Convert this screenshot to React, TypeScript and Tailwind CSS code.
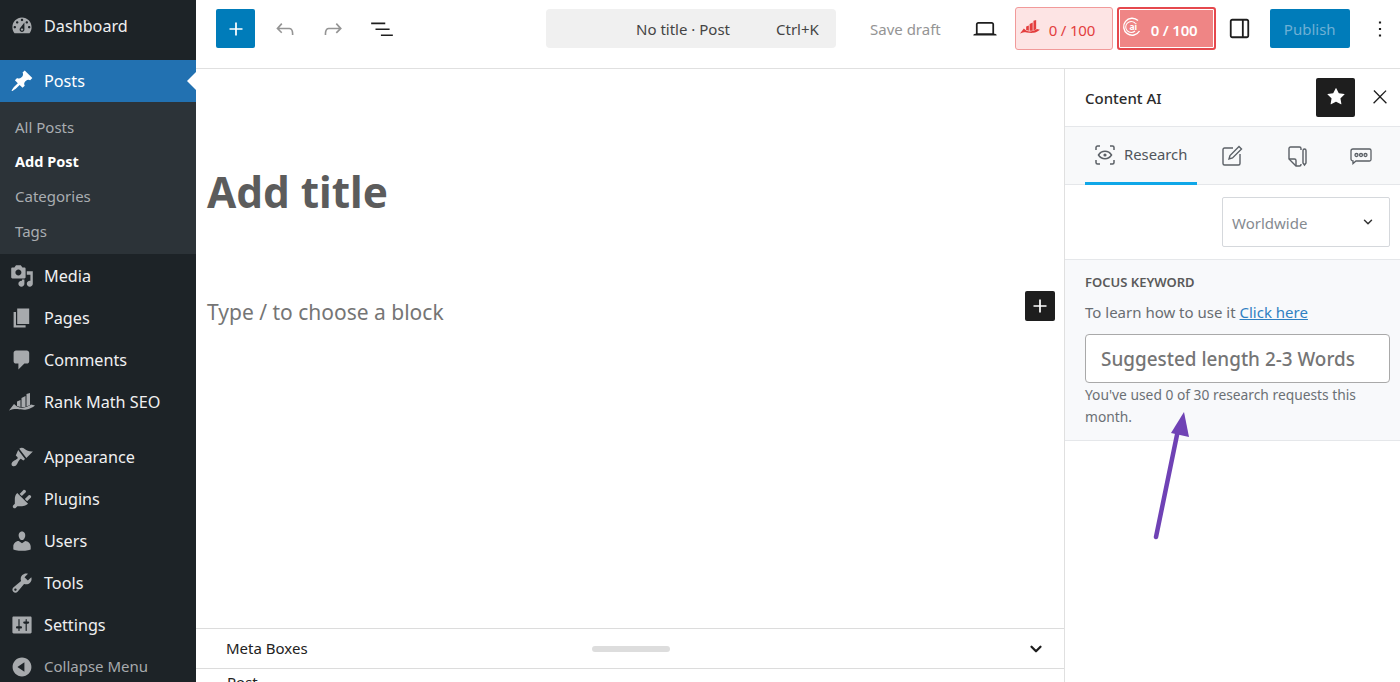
import React from "react";
import { ChevronDown } from "lucide-react";

const font = "font-['Noto_Sans',sans-serif]";

interface MenuItem {
  label: string;
  path?: string;
  custom?: React.ReactNode;
  gapBefore?: boolean;
}

// dashicons, 20x20 grid
const paths = {
  dashboard:
    "M3.76 16h12.48c1.1-1.37 1.76-3.11 1.76-5 0-4.42-3.58-8-8-8s-8 3.58-8 8c0 1.89.66 3.63 1.76 5zM10 4c.55 0 1 .45 1 1s-.45 1-1 1-1-.45-1-1 .45-1 1-1zM6 6c.55 0 1 .45 1 1s-.45 1-1 1-1-.45-1-1 .45-1 1-1zm8 0c.55 0 1 .45 1 1s-.45 1-1 1-1-.45-1-1 .45-1 1-1zm-5.37 5.55L12 7v6c0 1.1-.9 2-2 2s-2-.9-2-2c0-.57.24-1.08.63-1.45zM4 10c.55 0 1 .45 1 1s-.45 1-1 1-1-.45-1-1 .45-1 1-1zm12 0c.55 0 1 .45 1 1s-.45 1-1 1-1-.45-1-1 .45-1 1-1zm-5 3c0-.55-.45-1-1-1s-1 .45-1 1 .45 1 1 1 1-.45 1-1z",
  post: "M10.44 3.02l1.82-1.82 6.36 6.35-1.83 1.82c-1.05-.68-2.48-.57-3.41.36l-.75.75c-.92.93-1.04 2.35-.35 3.41l-1.83 1.82-2.41-2.41-2.8 2.79c-.42.42-3.38 2.71-3.8 2.29s1.86-3.39 2.28-3.81l2.79-2.79L4.1 9.36l1.83-1.82c1.05.69 2.48.57 3.4-.36l.75-.75c.93-.92 1.05-2.35.36-3.41z",
  media:
    "M13 11V4c0-.55-.45-1-1-1h-1.67L9 1H5L3.67 3H2c-.55 0-1 .45-1 1v7c0 .55.45 1 1 1h10c.55 0 1-.45 1-1zM7 4.5c1.38 0 2.5 1.12 2.5 2.5S8.38 9.5 7 9.5 4.5 8.38 4.5 7 5.62 4.5 7 4.5zM14 6h5v10.5c0 1.38-1.12 2.5-2.5 2.5S14 17.88 14 16.5s1.12-2.5 2.5-2.5c.17 0 .34.02.5.05V9h-3V6zm-4 8.05V13h2v3.5c0 1.38-1.12 2.5-2.5 2.5S7 17.88 7 16.5 8.12 14 9.5 14c.17 0 .34.02.5.05z",
  page: "M6 15V2h10v13H6zm-1 1h8v2H3V5h2v11z",
  comments:
    "M5 2h9c1.1 0 2 .9 2 2v7c0 1.1-.9 2-2 2h-2l-5 5v-5H5c-1.1 0-2-.9-2-2V4c0-1.1.9-2 2-2z",
  plugins:
    "M13.11 4.36L9.87 7.6 8 5.73l3.24-3.24c.35-.34 1.05-.2 1.56.32.52.51.66 1.21.31 1.55zm-8 1.77l.91-1.12 9.01 9.01-1.19.84c-.71.71-2.63 1.16-3.82 1.16H6.14L4.9 17.26c-.59.59-1.54.59-2.12 0-.59-.58-.59-1.53 0-2.12l1.24-1.24v-3.88c0-1.13.4-3.19 1.09-3.89zm7.26 3.97l3.24-3.24c.34-.35 1.04-.21 1.55.31.52.51.66 1.21.31 1.55l-3.24 3.25z",
  users:
    "M10 9.25c-2.27 0-2.73-3.44-2.73-3.44C7 4.02 7.82 2 9.97 2c2.16 0 2.98 2.02 2.71 3.81 0 0-.41 3.44-2.68 3.44zm0 2.57L12.72 10c2.39 0 4.52 2.33 4.52 4.53v2.49s-3.65 1.13-7.24 1.13c-3.65 0-7.24-1.13-7.24-1.13v-2.49c0-2.25 1.94-4.48 4.47-4.48z",
  tools:
    "M16.68 9.77c-1.34 1.34-3.3 1.67-4.95.99l-5.41 6.52c-.99.99-2.59.99-3.58 0s-.99-2.59 0-3.57l6.52-5.42c-.68-1.65-.35-3.61.99-4.95 1.28-1.28 3.12-1.62 4.72-1.06l-2.89 2.89 2.82 2.82 2.86-2.87c.53 1.58.18 3.39-1.08 4.65zM3.81 16.21c.4.39 1.04.39 1.43 0 .4-.4.4-1.04 0-1.43-.39-.4-1.03-.4-1.43 0-.39.39-.39 1.03 0 1.43z",
  settings:
    "M18 16V4c0-.55-.45-1-1-1H3c-.55 0-1 .45-1 1v12c0 .55.45 1 1 1h14c.55 0 1-.45 1-1zM8 11h1c.55 0 1 .45 1 1s-.45 1-1 1H8v1.5c0 .28-.22.5-.5.5s-.5-.22-.5-.5V13H6c-.55 0-1-.45-1-1s.45-1 1-1h1V5.5c0-.28.22-.5.5-.5s.5.22.5.5V11zm5-2h-1c-.55 0-1-.45-1-1s.45-1 1-1h1V5.5c0-.28.22-.5.5-.5s.5.22.5.5V7h1c.55 0 1 .45 1 1s-.45 1-1 1h-1v5.5c0 .28-.22.5-.5.5s-.5-.22-.5-.5V9z",
  collapse:
    "M10 2.16c4.33 0 7.84 3.51 7.84 7.84s-3.51 7.84-7.84 7.84S2.16 14.33 2.16 10 5.71 2.16 10 2.16zm2 11.72V6.12L6.18 9.97z",
};

// gutenberg icons, 24x24 grid
const gb = {
  plus: "M18 11.2h-5.2V6h-1.6v5.2H6v1.6h5.2V18h1.6v-5.2H18z",
  undo: "M18.3 11.7c-.6-.6-1.4-.9-2.3-.9H6.7l2.9-3.3-1.1-1-4.5 5L8.5 16l1-1-2.7-2.7H16c.5 0 .9.2 1.3.5 1 1 1 3.4 1 4.5v.3h1.5v-.2c0-1.5 0-4.3-1.5-5.7z",
  redo: "M15.6 6.5l-1.1 1 2.9 3.3H8c-.9 0-1.7.3-2.3.9-1.4 1.5-1.4 4.2-1.4 5.6v.2h1.5v-.3c0-1.1 0-3.5 1-4.5.3-.3.7-.5 1.3-.5h9.2L14.5 15l1.1 1.1 4.6-4.6-4.6-5z",
  list: "M2 6h13v1.5H2V6zm4 5.5h13V13H6v-1.5zM11 17h11v1.5H11V17z",
  desktop:
    "M20.5 16h-.7V8c0-1.1-.9-2-2-2H6.2c-1.1 0-2 .9-2 2v8h-.7c-.8 0-1.5.7-1.5 1.5h20c0-.8-.7-1.5-1.5-1.5zM5.7 8c0-.3.2-.5.5-.5h11.6c.3 0 .5.2.5.5v7.6H5.7V8z",
  sidebar:
    "M18 4H6c-1.1 0-2 .9-2 2v12c0 1.1.9 2 2 2h12c1.1 0 2-.9 2-2V6c0-1.1-.9-2-2-2zm-4 14.5H6c-.3 0-.5-.2-.5-.5V6c0-.3.2-.5.5-.5h8v13zm4.5-.5c0 .3-.2.5-.5.5h-2.5v-13H18c.3 0 .5.2.5.5v12z",
  more: "M13 19h-2v-2h2v2zm0-6h-2v-2h2v2zm0-6h-2V5h2v2z",
  close:
    "M13 11.8l6.1-6.3-1-1-6.1 6.2-6.1-6.3-1 1 6.1 6.3-6.5 6.7 1 1 6.5-6.6 6.5 6.6 1-1z",
  star: "M11.776 4.454a.25.25 0 01.448 0l2.069 4.192a.25.25 0 00.188.137l4.626.672a.25.25 0 01.139.426l-3.348 3.263a.25.25 0 00-.072.222l.79 4.607a.25.25 0 01-.362.263l-4.138-2.175a.25.25 0 00-.232 0l-4.138 2.175a.25.25 0 01-.363-.263l.79-4.607a.25.25 0 00-.071-.222L4.754 9.881a.25.25 0 01.139-.426l4.626-.672a.25.25 0 00.188-.137l2.069-4.192z",
};

const Icon = ({ d, box = 20, className }: { d: string; box?: number; className?: string }) => (
  <svg viewBox={`0 0 ${box} ${box}`} className={className} fill="currentColor">
    <path d={d} />
  </svg>
);

const RankMathIcon = ({ className }: { className?: string }) => (
  <svg viewBox="0 0 26 20" className={className} fill="currentColor">
    <path d="M8 14V9.500L11.500 8V15zM12.500 15V6L16.500 4V15zM17.500 14.500V2L21 1V13z" />
    <path d="M0 18.500L5 12l3 2.500c3 1.500 6 1.500 9 .5 2-.6 4-1.600 5-2.500l4 1c-2.500 2-5.500 3.500-8.500 4-3.500.6-6-.3-9-.5-3-.2-5 .2-8.500 1.500z" />
  </svg>
);

const BrushIcon = ({ className }: { className?: string }) => (
  <svg viewBox="0 0 22 20" className={className} fill="currentColor">
    <path d="M8.5 2.5c1.5-1.4 3.5-1 5 .2 2 1.6 3.800 2.500 7.500 2.300l-6 6z" />
    <path d="M7.500 3.500l6.300 8.300-1.600 1.500-2.300-1.800c-.9.400-1.300 1.200-2.100 2.400-.7 1.100-1.300 3-2.300 3.900-1.200 1.100-3.300.9-3.900-.3-.6-1.300.2-2.800 1.400-3.600 1.200-.9 2.900-1.500 3.700-2.300.6-.6.400-1.200-.2-1.800l-1.200-1.100z" />
  </svg>
);

const menuTop: MenuItem[] = [
  { label: "Media", path: paths.media },
  { label: "Pages", path: paths.page },
  { label: "Comments", path: paths.comments },
  { label: "Rank Math SEO", custom: <RankMathIcon className="w-[26px] h-5" /> },
  { label: "Appearance", custom: <BrushIcon className="w-6 h-[22px]" />, gapBefore: true },
  { label: "Plugins", path: paths.plugins },
  { label: "Users", path: paths.users },
  { label: "Tools", path: paths.tools },
  { label: "Settings", path: paths.settings },
];

const subItems = ["All Posts", "Add Post", "Categories", "Tags"];

const Sidebar = () => (
  <aside className="relative w-[196px] shrink-0 h-[682px] bg-[#1d2327] text-[#f0f0f1] text-[16.200px] overflow-hidden">
    <div className="flex items-center h-[42px] mt-[5px] mb-[13px]">
      <div className="w-[44px] flex justify-center text-[#a7aaad]">
        <Icon d={paths.dashboard} className="w-6 h-6" />
      </div>
      <span>Dashboard</span>
    </div>
    <div className="relative flex items-center h-[42px] bg-[#2271b1] text-white">
      <div className="w-[44px] flex justify-center">
        <Icon d={paths.post} className="w-6 h-6" />
      </div>
      <span>Posts</span>
      <div className="absolute right-0 top-[12px] border-y-[9px] border-y-transparent border-r-[9px] border-r-white" />
    </div>
    <div className="bg-[#2c3338] h-[152px] pt-[8px] pb-[6px] pl-[15px] text-[15px] text-[#a9adb1]">
      {subItems.map((item) => (
        <div
          key={item}
          className={`h-[34.500px] flex items-center ${item === "Add Post" ? "font-bold text-[14.500px] text-white" : ""}`}
        >
          {item}
        </div>
      ))}
    </div>
    <div className="h-[1px]" />
    {menuTop.map((item) => (
      <div key={item.label} className={`flex items-center h-[42px] ${item.gapBefore ? "mt-[13px]" : ""}`}>
        <div className="w-[44px] flex justify-center text-[#a7aaad]">
          {item.custom ?? <Icon d={item.path!} className="w-6 h-6" />}
        </div>
        <span>{item.label}</span>
      </div>
    ))}
    <div className="flex items-center h-[42px] text-[#a7aaad] text-[15px]">
      <div className="w-[44px] flex justify-center">
        <Icon d={paths.collapse} className="w-6 h-6" />
      </div>
      <span className="-mt-[1px]">Collapse Menu</span>
    </div>
  </aside>
);

const TopBar = () => (
  <header className="flex items-center h-[69px] border-b border-[#e0e0e0] bg-white shrink-0 pl-[20px] pb-[11px]">
    <div className="w-[39px] h-[39px] rounded-[2px] bg-[#007cba] text-white flex items-center justify-center">
      <Icon d={gb.plus} box={24} className="w-[26px] h-[26px]" />
    </div>
    <Icon d={gb.undo} box={24} className="w-[26px] h-[26px] ml-[17px] text-[#949494]" />
    <Icon d={gb.redo} box={24} className="w-[26px] h-[26px] ml-[22px] text-[#949494]" />
    <Icon d={gb.list} box={24} className="w-[26px] h-[26px] ml-[23px] text-[#1e1e1e]" />
    <div className="ml-[151px] w-[290px] h-[39px] rounded-[4px] bg-[#f0f0f0] flex items-center text-[15px] text-[#444]">
      <span className="ml-[90px] mt-[2px]">No title · Post</span>
      <span className="ml-[46px] mt-[2px]">Ctrl+K</span>
    </div>
    <span className="ml-[34px] mt-[2px] text-[15px] text-[#949494]">Save draft</span>
    <Icon d={gb.desktop} box={24} className="w-[28px] h-[28px] ml-[30px] text-[#1e1e1e]" />
    <div className="ml-[16px] w-[98px] h-[43px] rounded-[3px] border border-[#f19a9a] bg-[#fde4e4] flex items-center pl-[4px] text-[15px] text-[#e33e3e]">
      <RankMathIcon className="w-[20px] h-[16px] -mt-[4px]" />
      <span className="ml-[9px] mt-[3px] tracking-[-0.2px]">0 / 100</span>
    </div>
    <div className="ml-[4px] w-[99px] h-[43px] rounded-[3px] border-2 border-[#e5484d] bg-[#ef8585] outline outline-1 outline-white -outline-offset-[3px] flex items-center pl-[3px] text-[15px] font-semibold text-white">
      <svg viewBox="0 0 20 20" className="w-[20px] h-[20px] -mt-[3px]" fill="none" stroke="currentColor">
        <path d="M16 3.500a8.500 8.500 0 1 0 1.500 10.500" strokeWidth="1.400" />
        <path d="M13 6a5.500 5.500 0 1 0 0 8" strokeWidth="1.100" />
        <text x="7.500" y="12.500" fontSize="8.500" fontWeight="700" fill="currentColor" stroke="none">
          ai
        </text>
      </svg>
      <span className="ml-[9px] mt-[3px] tracking-[-0.2px]">0 / 100</span>
    </div>
    <Icon d={gb.sidebar} box={24} className="w-[29px] h-[29px] ml-[9px] text-[#1e1e1e]" />
    <div className="ml-[16px] w-[80px] h-[39px] rounded-[2px] bg-[#007cba] flex items-center justify-center text-[15px] text-[#6eb0d5]">
      <span className="mt-[2px]">Publish</span>
    </div>
    <Icon d={gb.more} box={24} className="w-[26px] h-[26px] ml-[17px] text-[#1e1e1e]" />
  </header>
);

const Editor = () => (
  <main className="flex-1 min-w-0 flex flex-col relative">
    <div className="flex-1 pt-[91px] pl-[11px] pr-[9px]">
      <h1 className="text-[42.300px] leading-[64px] font-bold text-[#5c5c5c]">Add title</h1>
      <div className="flex items-center justify-between h-[30px] mt-[67px]">
        <span className="mt-[13px] text-[21px] text-[#757575]">Type / to choose a block</span>
        <div className="w-[30px] h-[30px] rounded-[2px] bg-[#1e1e1e] text-white flex items-center justify-center">
          <Icon d={gb.plus} box={24} className="w-[26px] h-[26px]" />
        </div>
      </div>
    </div>
    <div className="h-[41px] border-y border-[#dcdcdc] flex items-center justify-between pl-[30px] pr-[19px] shrink-0 relative">
      <span className="text-[15px] text-[#222]">Meta Boxes</span>
      <div className="absolute left-[396px] top-[17px] w-[78px] h-[6px] rounded-full bg-[#dddddd]" />
      <ChevronDown className="w-[18px] h-[18px] text-[#1e1e1e]" strokeWidth={3} />
    </div>
    <div className="h-[13px] shrink-0 pl-[31px] text-[15px] leading-[26px] text-[#222] overflow-hidden">Post</div>
  </main>
);

const tabIcons = {
  eye: (
    <svg viewBox="0 0 24 24" className="w-[24px] h-[24px]" fill="none" stroke="currentColor" strokeWidth="1.500">
      <path d="M3 7V4.500A1.500 1.500 0 0 1 4.500 3H7M17 3h2.500A1.500 1.500 0 0 1 21 4.500V7M21 17v2.500a1.500 1.500 0 0 1-1.500 1.500H17M7 21H4.500A1.500 1.500 0 0 1 3 19.500V17" />
      <path d="M5.500 12c3-5 10-5 13 0-3 5-10 5-13 0z" />
      <circle cx="12" cy="12" r="1.600" fill="currentColor" stroke="none" />
    </svg>
  ),
  edit: (
    <svg viewBox="0 0 24 24" className="w-[24px] h-[24px]" fill="none" stroke="currentColor" strokeWidth="1.400">
      <path d="M13 4H4.500A1.500 1.500 0 0 0 3 5.500v14A1.500 1.500 0 0 0 4.500 21h14a1.500 1.500 0 0 0 1.500-1.500V10" />
      <path d="M9 15l1-3.500L19 2.500l2.500 2.500-9 9z" />
    </svg>
  ),
  doc: (
    <svg viewBox="0 0 24 24" className="w-[24px] h-[24px]" fill="none" stroke="currentColor" strokeWidth="1.400">
      <path d="M16 6V4.500A1.500 1.500 0 0 0 14.500 3h-9A1.500 1.500 0 0 0 4 4.500V15l7 7h3.500a1.500 1.500 0 0 0 1.500-1.500V20" />
      <path d="M4 15h5.500a1.500 1.500 0 0 1 1.500 1.500V22" />
      <path d="M18 6.500a1.500 1.500 0 0 1 3 0V19l-1.500 2-1.500-2z" />
    </svg>
  ),
  chat: (
    <svg viewBox="0 0 24 24" className="w-[24px] h-[24px]" fill="none" stroke="currentColor" strokeWidth="1.300">
      <path d="M4 5h16.500A1.500 1.500 0 0 1 22 6.500v9a1.500 1.500 0 0 1-1.500 1.500H7l-3 2.500V17a2 2 0 0 1-2-2V7a2 2 0 0 1 2-2z" />
      <circle cx="7.500" cy="11" r="1.500" />
      <circle cx="12" cy="11" r="1.500" />
      <circle cx="16.500" cy="11" r="1.500" />
    </svg>
  ),
};

const Panel = () => (
  <aside className="w-[336px] shrink-0 border-l border-[#e0e0e0] flex flex-col bg-white">
    <div className="h-[57px] flex items-center pl-[20px] shrink-0">
      <span className="mt-[2px] text-[15px] font-medium text-[#2b2b2b]">Content AI</span>
      <div className="ml-auto -mt-[1px] w-[39px] h-[39px] rounded-[2px] bg-[#1e1e1e] text-white flex items-center justify-center">
        <Icon d={gb.star} box={24} className="w-[28px] h-[28px]" />
      </div>
      <Icon d={gb.close} box={24} className="w-[22px] h-[22px] -mt-[1px] ml-[14px] mr-[9px] text-[#1e1e1e]" />
    </div>
    <div className="h-[59px] shrink-0 bg-[#f8f9fa] border-y border-[#e5e7ea] flex items-stretch pl-[20px] text-[#5b6066]">
      <div className="w-[112px] border-b-[3px] border-[#10a7e8] -mb-[1px] flex items-center pl-[8px] gap-[7px]">
        {tabIcons.eye}
        <span className="text-[14.800px] text-[#50555b]">Research</span>
      </div>
      <div className="ml-[23px] flex items-center">{tabIcons.edit}</div>
      <div className="ml-[41px] flex items-center">{tabIcons.doc}</div>
      <div className="ml-[40px] flex items-center">{tabIcons.chat}</div>
    </div>
    <div className="h-[75px] shrink-0 border-b border-[#e5e7ea] flex justify-end items-start pt-[12px] pr-[10px]">
      <div className="w-[168px] h-[50px] rounded-[2px] border border-[#d5d8dc] flex items-center justify-between pl-[9px] pr-[14px] text-[15px] text-[#858a90]">
        <span className="mt-[2px]">Worldwide</span>
        <ChevronDown className="w-[14px] h-[14px] text-[#333]" strokeWidth={2.500} />
      </div>
    </div>
    <div className="h-[181px] shrink-0 bg-[#f8f9fb] border-b border-[#e5e7ea] pl-[20px] pr-[10px] pt-[13px]">
      <div className="text-[13px] leading-[18px] font-semibold text-[#5a5a5a]">FOCUS KEYWORD</div>
      <div className="mt-[9px] text-[15px] leading-[24px] text-[#686d72]">
        To learn how to use it <a className="text-[#2f80c2] underline">Click here</a>
      </div>
      <div className="mt-[10px] h-[49px] rounded-[4px] border border-[#a9a9a9] bg-white flex items-center pl-[15px] text-[18.900px] font-medium text-[#757575] whitespace-nowrap">
        <span className="mt-[1px]">Suggested length 2-3 Words</span>
      </div>
      <p className="mt-[1px] text-[13.800px] leading-[22px] text-[#6b7075]">
        You've used 0 of 30 research requests this month.
      </p>
    </div>
    <div className="flex-1" />
  </aside>
);

export default function App() {
  return (
    <div className={`relative flex w-[1400px] h-[682px] overflow-hidden bg-white ${font}`}>
      <Sidebar />
      <div className="flex-1 min-w-0 flex flex-col">
        <TopBar />
        <div className="flex-1 min-h-0 flex">
          <Editor />
          <Panel />
        </div>
      </div>
      {/* annotation arrow over the panel */}
      <svg className="absolute left-[1140px] top-[400px] w-[60px] h-[150px]" viewBox="0 0 60 150">
        <path d="M16 137L38 30" stroke="#6f42b5" strokeWidth="4.500" strokeLinecap="round" fill="none" />
        <path d="M44 12L31 33L49 37z" fill="#6f42b5" />
      </svg>
    </div>
  );
}
